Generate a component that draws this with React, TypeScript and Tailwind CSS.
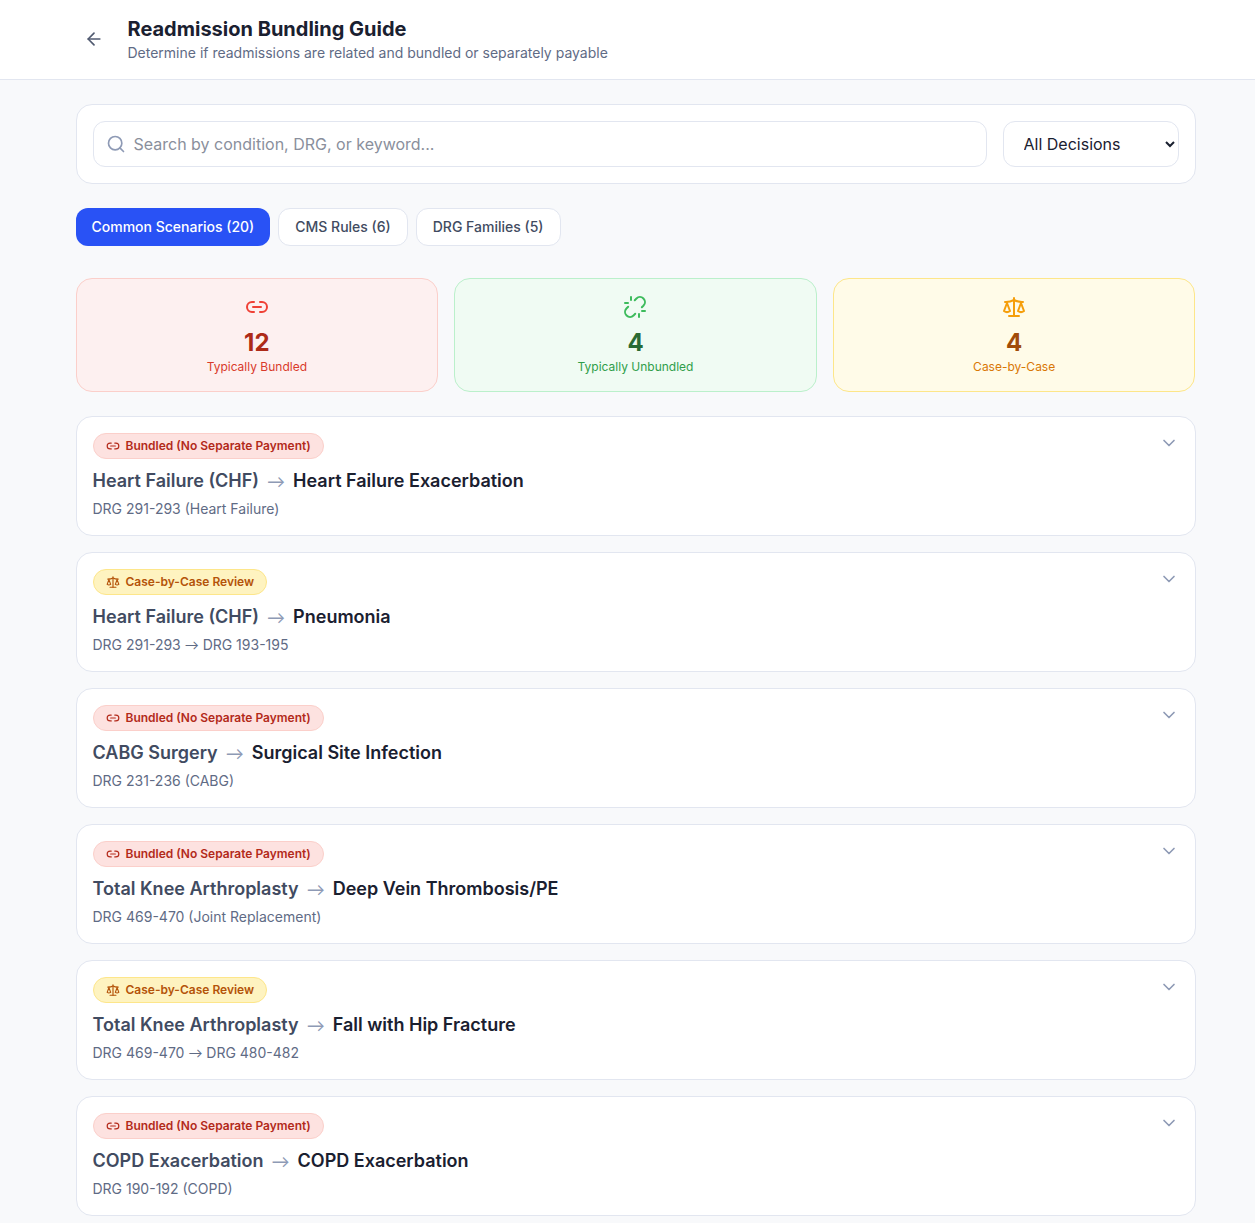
import { ArrowLeft, ChevronDown, Link2, Scale, Search, Unlink } from "lucide-react";

type Decision = "bundled" | "case";

interface Scenario {
  decision: Decision;
  from: string;
  to: string;
  drg: React.ReactNode;
}

const Arrow = () => <span className="font-['Lato',sans-serif]">→</span>;

const scenarios: Scenario[] = [
  { decision: "bundled", from: "Heart Failure (CHF)", to: "Heart Failure Exacerbation", drg: "DRG 291-293 (Heart Failure)" },
  { decision: "case", from: "Heart Failure (CHF)", to: "Pneumonia", drg: <>DRG 291-293 <Arrow /> DRG 193-195</> },
  { decision: "bundled", from: "CABG Surgery", to: "Surgical Site Infection", drg: "DRG 231-236 (CABG)" },
  { decision: "bundled", from: "Total Knee Arthroplasty", to: "Deep Vein Thrombosis/PE", drg: "DRG 469-470 (Joint Replacement)" },
  { decision: "case", from: "Total Knee Arthroplasty", to: "Fall with Hip Fracture", drg: <>DRG 469-470 <Arrow /> DRG 480-482</> },
  { decision: "bundled", from: "COPD Exacerbation", to: "COPD Exacerbation", drg: "DRG 190-192 (COPD)" },
];

function Badge({ decision }: { decision: Decision }) {
  if (decision === "bundled") {
    return (
      <span className="inline-flex h-[26px] items-center gap-1.5 rounded-full border border-[#fbcfca] bg-[#fde2e0] px-3 text-xs font-semibold text-[#b32a1a]">
        <Link2 className="h-3.5 w-3.5" />
        Bundled (No Separate Payment)
      </span>
    );
  }
  return (
    <span className="inline-flex h-[26px] items-center gap-1.5 rounded-full border border-[#fde68a] bg-[#fef3c0] px-3 text-xs font-semibold text-[#b45309]">
      <Scale className="h-3.5 w-3.5" />
      Case-by-Case Review
    </span>
  );
}

function ScenarioCard({ scenario }: { scenario: Scenario }) {
  return (
    <div className="flex h-[120px] items-start justify-between rounded-2xl border border-[#e2e6f0] bg-white px-4 pt-4">
      <div>
        <Badge decision={scenario.decision} />
        <div className="mt-2 flex h-7 items-center text-lg font-semibold">
          <span className="text-[#414b61]">{scenario.from}</span>
          <span className="mx-2 font-['Lato',sans-serif] font-normal text-[#8e9ab5]">→</span>
          <span className="text-[#1a2030]">{scenario.to}</span>
        </div>
        <div className="mt-1 h-5 text-sm text-[#5f6b85]">{scenario.drg}</div>
      </div>
      <ChevronDown className="h-5 w-5 text-[#8e9ab5]" />
    </div>
  );
}

function StatCard({
  icon,
  value,
  label,
  boxClass,
  valueClass,
  labelClass,
}: {
  icon: React.ReactNode;
  value: string;
  label: string;
  boxClass: string;
  valueClass: string;
  labelClass: string;
}) {
  return (
    <div className={`flex h-[114px] flex-col items-center rounded-2xl border pt-4 ${boxClass}`}>
      {icon}
      <div className={`mt-2 text-2xl leading-8 font-bold ${valueClass}`}>{value}</div>
      <div className={`-mt-px text-xs leading-[18px] ${labelClass}`}>{label}</div>
    </div>
  );
}

export default function App() {
  return (
    <div className="min-h-screen bg-[#f8f9fb] font-['Inter',sans-serif] antialiased">
      {/* Header */}
      <div className="flex h-20 items-center border-b border-[#e2e6f0] bg-white pl-[84px]">
        <ArrowLeft className="mt-[-2px] h-5 w-5 text-[#505a70]" />
        <div className="mt-[-2px] ml-[23.5px]">
          <h1 className="text-xl leading-7 font-bold text-[#1a2030]">Readmission Bundling Guide</h1>
          <p className="text-sm leading-5 text-[#5f6b85]">Determine if readmissions are related and bundled or separately payable</p>
        </div>
      </div>

      <div className="ml-[75.5px] w-[1120px] pt-6">
        {/* Search */}
        <div className="flex gap-4 rounded-2xl border border-[#e2e6f0] bg-white p-4">
          <div className="flex h-[46px] flex-1 items-center gap-2 rounded-xl border border-[#e2e6f0] bg-white px-3">
            <Search className="h-5 w-5 text-[#8e9ab5]" />
            <span className="text-base text-[#8a8f9c]">Search by condition, DRG, or keyword...</span>
          </div>
          <select className="h-[46px] w-[176px] rounded-xl border border-[#e2e6f0] bg-white pl-4 text-base text-[#1a2030]">
            <option>All Decisions</option>
          </select>
        </div>

        {/* Tabs */}
        <div className="mt-6 flex gap-2">
          <div className="flex h-[38px] items-center rounded-xl bg-[#2952f5] px-4 text-sm font-medium text-white">Common Scenarios (20)</div>
          <div className="flex h-[38px] items-center rounded-xl border border-[#e2e6f0] bg-white px-4 text-sm font-medium text-[#414b61]">CMS Rules (6)</div>
          <div className="flex h-[38px] items-center rounded-xl border border-[#e2e6f0] bg-white px-4 text-sm font-medium text-[#414b61]">DRG Families (5)</div>
        </div>

        {/* Stats */}
        <div className="mt-8 grid grid-cols-3 gap-4">
          <StatCard
            icon={<Link2 className="h-6 w-6 text-[#ef4136]" />}
            value="12"
            label="Typically Bundled"
            boxClass="border-[#fbcfca] bg-[#fdf0f0]"
            valueClass="text-[#ad2a18]"
            labelClass="text-[#d93a2b]"
          />
          <StatCard
            icon={<Unlink className="h-6 w-6 text-[#3dbb5c]" />}
            value="4"
            label="Typically Unbundled"
            boxClass="border-[#bbf0cb] bg-[#f0fbf3]"
            valueClass="text-[#2a6a34]"
            labelClass="text-[#2f9e4a]"
          />
          <StatCard
            icon={<Scale className="h-6 w-6 text-[#f59e0b]" />}
            value="4"
            label="Case-by-Case"
            boxClass="border-[#fde68a] bg-[#fffbe8]"
            valueClass="text-[#a14b08]"
            labelClass="text-[#d97706]"
          />
        </div>

        {/* Scenario list */}
        <div className="mt-6 flex flex-col gap-4">
          {scenarios.map((s) => (
            <ScenarioCard key={s.from + s.to} scenario={s} />
          ))}
        </div>
      </div>
    </div>
  );
}
